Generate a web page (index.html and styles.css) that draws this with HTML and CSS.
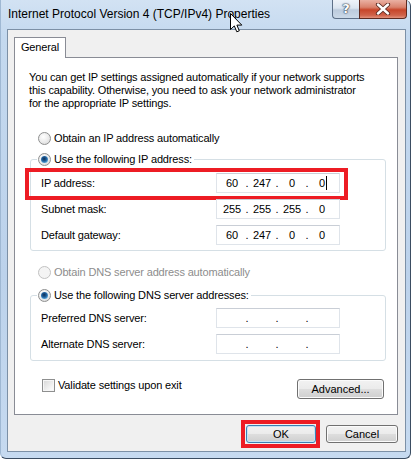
FILE: index.html
```html
<!DOCTYPE html>
<html lang="en">
<head>
  <meta charset="UTF-8" />
  <meta name="viewport" content="width=device-width, initial-scale=1.0" />
  <title>Internet Protocol Version 4 (TCP/IPv4) Properties</title>
  <link rel="stylesheet" href="styles.css">
</head>
<body>
  <div class="window">
    <div class="titlebar">
      <span class="title">Internet Protocol Version 4 (TCP/IPv4) Properties</span>
      <div class="caption-btns">
        <div class="cap-help">?</div>
        <div class="cap-close">
          <svg width="16" height="12" viewBox="0 0 16 12">
            <path d="M3 1.5 L13 10.5 M13 1.5 L3 10.5" stroke="#5a2a22" stroke-width="4.2" stroke-linecap="round"/>
            <path d="M3 1.5 L13 10.5 M13 1.5 L3 10.5" stroke="#fff" stroke-width="2.4" stroke-linecap="round"/>
          </svg>
        </div>
      </div>
    </div>

    <div class="client">
      <div class="tab">General</div>
      <div class="panel">
        <p class="intro">You can get IP settings assigned automatically if your network supports<br>this capability. Otherwise, you need to ask your network administrator<br>for the appropriate IP settings.</p>

        <div class="option first">
          <span class="radio"></span>
          <span>Obtain an IP address automatically</span>
        </div>

        <fieldset class="group ip-group">
          <legend>
            <span class="option">
              <span class="radio checked"></span>
              <span>Use the following IP address:</span>
            </span>
          </legend>
          <div class="field highlight">
            <span class="field-label">IP address:</span>
            <div class="ipbox">
              <span class="oct">60</span><span class="dot">.</span><span class="oct">247</span><span class="dot">.</span><span class="oct">0</span><span class="dot">.</span><span class="oct">0<span class="caret"></span></span>
            </div>
            <div class="red-box"></div>
          </div>
          <div class="field">
            <span class="field-label">Subnet mask:</span>
            <div class="ipbox">
              <span class="oct">255</span><span class="dot">.</span><span class="oct">255</span><span class="dot">.</span><span class="oct">255</span><span class="dot">.</span><span class="oct">0</span>
            </div>
          </div>
          <div class="field">
            <span class="field-label">Default gateway:</span>
            <div class="ipbox">
              <span class="oct">60</span><span class="dot">.</span><span class="oct">247</span><span class="dot">.</span><span class="oct">0</span><span class="dot">.</span><span class="oct">0</span>
            </div>
          </div>
        </fieldset>

        <div class="option disabled dns-auto">
          <span class="radio"></span>
          <span>Obtain DNS server address automatically</span>
        </div>

        <fieldset class="group dns-group">
          <legend>
            <span class="option">
              <span class="radio checked"></span>
              <span>Use the following DNS server addresses:</span>
            </span>
          </legend>
          <div class="field">
            <span class="field-label">Preferred DNS server:</span>
            <div class="ipbox">
              <span class="oct"></span><span class="dot">.</span><span class="oct"></span><span class="dot">.</span><span class="oct"></span><span class="dot">.</span><span class="oct"></span>
            </div>
          </div>
          <div class="field">
            <span class="field-label">Alternate DNS server:</span>
            <div class="ipbox">
              <span class="oct"></span><span class="dot">.</span><span class="oct"></span><span class="dot">.</span><span class="oct"></span><span class="dot">.</span><span class="oct"></span>
            </div>
          </div>
        </fieldset>

        <div class="bottom-row">
          <div class="check-row">
            <span class="checkbox"></span>
            <span>Validate settings upon exit</span>
          </div>
          <button class="btn advanced">Advanced...</button>
        </div>
      </div>

      <div class="dialog-buttons">
        <div class="ok-wrap">
          <button class="btn default ok">OK</button>
          <div class="red-box"></div>
        </div>
        <button class="btn cancel">Cancel</button>
      </div>
    </div>

    <svg class="cursor" width="13" height="20" viewBox="0 0 13 20">
      <path d="M0.5 0.5 L0.5 16.5 L4.3 12.9 L6.8 18.8 L9.3 17.8 L6.9 12.1 L11.8 12.1 Z" fill="#fff" stroke="#000" stroke-width="1"/>
    </svg>
  </div>
</body>
</html>
```

FILE: styles.css
```css
* {
  box-sizing: border-box;
}

body {
  margin: 0;
  background: #fff;
  font-family: "Liberation Sans", Arial, sans-serif;
  font-size: 11px;
  letter-spacing: -0.15px;
  color: #000;
}

.window {
  position: relative;
  width: 411px;
  height: 459px;
  background: linear-gradient(180deg, #d2e2f3 0%, #c4d9ef 8%, #bcd2eb 60%, #c6daf0 100%);
  border-left: 1px solid #9fb8d3;
  border-right: 1px solid #3b4d62;
  border-bottom: 1px solid #3b4d62;
  border-radius: 0 6px 6px 6px;
  padding: 0 4px 6px 6px;
  display: flex;
  flex-direction: column;
}

.titlebar {
  height: 29px;
  display: flex;
  justify-content: space-between;
  align-items: flex-start;
  margin-right: -1px;
}

.title {
  padding: 7px 0 0 1px;
  font-size: 12px;
  letter-spacing: 0;
  line-height: 14px;
  color: #000;
}

.caption-btns {
  display: flex;
  height: 19px;
}

.cap-help {
  width: 27px;
  height: 19px;
  border: 1px solid #5d7088;
  border-top: none;
  border-right: none;
  border-radius: 0 0 0 4px;
  background: linear-gradient(180deg, #eef3f9 0%, #dbe5f0 45%, #bccbdd 55%, #cbd9e8 100%);
  color: #fff;
  font-family: "DejaVu Sans", sans-serif;
  font-weight: bold;
  font-size: 13px;
  line-height: 17px;
  text-align: center;
  text-shadow: 0 0 1px #2d3b4c, 0 0 1px #2d3b4c, 0 0 2px #2d3b4c;
}

.cap-close {
  width: 48px;
  height: 19px;
  border: 1px solid #5e2a20;
  border-top: none;
  border-radius: 0 0 4px 0;
  background: linear-gradient(180deg, #eab1a3 0%, #d9826d 40%, #c7452a 55%, #d0634a 85%, #e2927d 100%);
  display: flex;
  align-items: center;
  justify-content: center;
}

.client {
  flex: 1;
  border: 1px solid #7c90a6;
  background: #f0f0f0;
  padding: 7px 7px 0 6px;
  display: flex;
  flex-direction: column;
}

.tab {
  align-self: flex-start;
  width: 52px;
  height: 21px;
  border: 1px solid #898c95;
  border-bottom: none;
  background: #fff;
  text-align: center;
  line-height: 19px;
  margin-bottom: -1px;
  position: relative;
  z-index: 1;
}

.panel {
  height: 358px;
  border: 1px solid #898c95;
  background: #fff;
  padding-top: 13px;
}

.intro {
  margin: 0 0 0 14px;
  line-height: 13px;
}

.option {
  display: flex;
  align-items: center;
  gap: 3px;
  height: 14px;
  white-space: nowrap;
}

.option.first {
  margin: 21px 0 0 23px;
}

.option.dns-auto {
  margin: 14px 0 0 23px;
}

.option.disabled {
  color: #8d8d8d;
}

.radio {
  width: 13px;
  height: 13px;
  border-radius: 50%;
  border: 1px solid #8e8f8f;
  background: radial-gradient(circle at 40% 35%, #ffffff 0%, #ececec 50%, #d4d4d4 100%);
  position: relative;
  flex: none;
}

.radio.checked::after {
  content: "";
  position: absolute;
  left: 2px;
  top: 2px;
  width: 7px;
  height: 7px;
  border-radius: 50%;
  background: radial-gradient(circle at 45% 40%, #0c2f55 0%, #1f5d99 40%, #5fb2e6 80%, #a7daf6 100%);
}

.disabled .radio {
  border-color: #c2c2c2;
  background: #f4f4f4;
}

.group {
  border: 1px solid #d5dfe5;
  border-radius: 3px;
  margin: 7px 11px 0 15px;
  padding: 7px 0 5px 6px;
  min-width: 0;
}

.dns-group {
  margin-top: 9px;
  padding-top: 6px;
  padding-bottom: 6px;
}

.group legend {
  padding: 0 2px 0 1px;
  height: 14px;
}

.field {
  position: relative;
  display: flex;
  align-items: center;
  height: 20px;
  padding-left: 4px;
}

.field + .field {
  margin-top: 6px;
}

.field-label {
  width: 175px;
  flex: none;
}

.ipbox {
  width: 124px;
  height: 20px;
  border: 1px solid #dfe4ea;
  border-top-color: #c9ced6;
  background: #fff;
  display: flex;
  align-items: center;
  padding-left: 3px;
}

.oct {
  width: 24px;
  text-align: center;
  white-space: nowrap;
}

.dot {
  width: 6px;
  text-align: center;
}

.caret {
  display: inline-block;
  width: 1px;
  height: 14px;
  background: #000;
  vertical-align: -3px;
  margin: 0 -2px 0 1px;
}

.red-box {
  position: absolute;
  border: 4px solid #ed1c24;
  pointer-events: none;
}

.highlight .red-box {
  left: -12px;
  top: -5px;
  width: 323px;
  height: 32px;
}

.bottom-row {
  display: flex;
  justify-content: space-between;
  align-items: flex-start;
  margin: 17px 13px 0 27px;
}

.check-row {
  display: flex;
  align-items: center;
  gap: 3px;
  height: 14px;
}

.checkbox {
  width: 13px;
  height: 13px;
  border: 1px solid #8e8f8f;
  background: linear-gradient(135deg, #d6d6d6 0%, #f4f4f4 70%, #ffffff 100%);
  box-shadow: inset 0 0 0 1px #f6f6f6;
}

.btn {
  font-family: inherit;
  font-size: 11px;
  color: #000;
  border: 1px solid #707070;
  border-radius: 3px;
  background: linear-gradient(180deg, #f2f2f2 0%, #ebebeb 48%, #dddddd 52%, #cfcfcf 100%);
  box-shadow: inset 0 0 0 1px #fbfbfb;
  padding: 0;
  line-height: 1;
}

.advanced {
  width: 87px;
  height: 20px;
  margin-top: 1px;
}

.dialog-buttons {
  display: flex;
  justify-content: flex-end;
  gap: 10px;
  margin-top: 10px;
}

.ok-wrap {
  position: relative;
}

.btn.default {
  border-color: #3c7fb1;
  box-shadow: inset 0 0 0 1px #c4e5f6;
}

.ok {
  width: 70px;
  height: 18px;
  display: block;
}

.cancel {
  width: 72px;
  height: 18px;
}

.ok-wrap .red-box {
  left: -5px;
  top: -5px;
  width: 79px;
  height: 28px;
}

.cursor {
  position: absolute;
  left: 229px;
  top: 13px;
}
```
